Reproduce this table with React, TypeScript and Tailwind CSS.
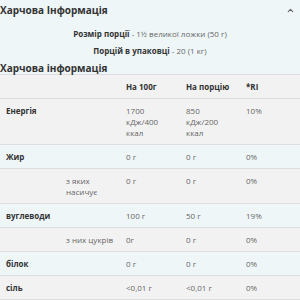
import React from "react";
import { ChevronUp } from "lucide-react";

type Row = {
  label?: string;
  sub?: string;
  per100: string;
  perServing: string;
  ri: string;
};

const rows: Row[] = [
  { label: "Енергія", per100: "1700 кДж/400 ккал", perServing: "850 кДж/200 ккал", ri: "10%" },
  { label: "Жир", per100: "0 г", perServing: "0 г", ri: "0%" },
  { sub: "з яких насичує", per100: "0 г", perServing: "0 г", ri: "0%" },
  { label: "вуглеводи", per100: "100 г", perServing: "50 г", ri: "19%" },
  { sub: "з них цукрів", per100: "0г", perServing: "0 г", ri: "0%" },
  { label: "білок", per100: "0 г", perServing: "0 г", ri: "0%" },
  { label: "сіль", per100: "<0,01 г", perServing: "<0,01 г", ri: "0%" },
];

const cell = "pl-[6px] pr-[8px] py-[6px] leading-[11px]";
const subCell = "pl-[6px] pr-[4px] py-[6px] leading-[11px]";

export default function App() {
  return (
    <div className="w-[300px] h-[300px] overflow-hidden bg-[#eef6f8] font-['Open_Sans',sans-serif] text-[#333]">
      <div className="h-[20px] flex items-center justify-between">
        <h2 className="text-[10px] font-bold leading-[14px]">Харчова Інформація</h2>
        <ChevronUp size={9} strokeWidth={3} className="mr-[5px] text-[#666]" />
      </div>

      <p className="mt-[8px] text-center text-[8px] leading-[12px] text-[#666]">
        <span className="font-bold text-[#333]">Розмір порції</span> - 1½ великої ложки (50 г)
      </p>
      <p className="mt-[5px] text-center text-[8px] leading-[12px] text-[#666]">
        <span className="font-bold text-[#333]">Порцій в упаковці</span> - 20 (1 кг)
      </p>

      <h3 className="mt-[5px] text-[10px] font-bold leading-[12px]">Харчова інформація</h3>

      <div className="border-t border-[#dedede] text-[8px]">
        <div className="grid grid-cols-[60px_60px_60px_60px_60px] bg-[#f2f2f2] border-b border-[#dedede]">
          <div className={cell}></div>
          <div className={subCell}></div>
          <div className={`${cell} font-bold`}>На 100г</div>
          <div className={`${cell} font-bold`}>На порцію</div>
          <div className={`${cell} font-bold`}>*RI</div>
        </div>
        {rows.map((r, i) => (
          <div
            key={i}
            className={`grid grid-cols-[60px_60px_60px_60px_60px] border-b border-[#dedede] ${
              i % 2 === 0 ? "bg-[#f2f2f2]" : ""
            }`}
          >
            <div className={`${cell} font-bold`}>{r.label}</div>
            <div className={`${subCell} text-[#666]`}>{r.sub}</div>
            <div className={`${cell} text-[#666]`}>{r.per100}</div>
            <div className={`${cell} text-[#666]`}>{r.perServing}</div>
            <div className={`${cell} text-[#666]`}>{r.ri}</div>
          </div>
        ))}
      </div>
    </div>
  );
}
